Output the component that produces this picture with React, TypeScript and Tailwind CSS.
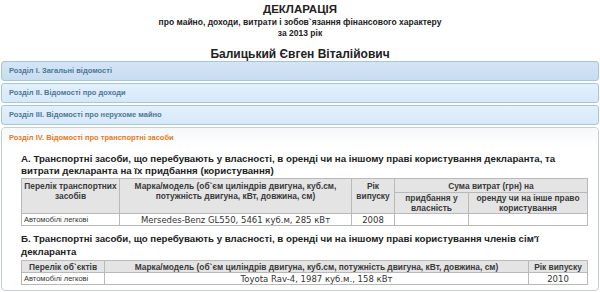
const sections = [
    { title: 'Розділ I. Загальні відомості', hover: true },
    { title: 'Розділ II. Відомості про доходи', hover: false },
    { title: 'Розділ III. Відомості про нерухоме майно', hover: false },
];

const th = 'border border-[#b9b9b9] bg-[#e4e4e4] px-[2px] font-bold text-[#3a3a3a] text-center font-["Liberation_Sans",Arial,sans-serif] text-[8.4px]';
const td = 'border border-[#b9b9b9] bg-white px-[2px] text-[#333]';

const App = () => {
    return (
        <div className="w-[600px] h-[292px] bg-white overflow-hidden font-['Liberation_Sans',Arial,sans-serif] text-[#222]">
            <div className="pt-[3px] text-center font-bold">
                <div className="text-[11.5px] leading-[13px]">ДЕКЛАРАЦІЯ</div>
                <div className="mt-[1px] text-[8.5px] leading-[11px]">про майно, доходи, витрати і зобов`язання фінансового характеру</div>
                <div className="text-[8.5px] leading-[11px]">за 2013 рік</div>
                <div className="mt-[8px] text-[12px] leading-[14px]">Балицький Євген Віталійович</div>
            </div>

            <div className="flex flex-col gap-[2px] px-[1px]">
                {sections.map((s) => (
                    <div
                        key={s.title}
                        className={`h-[20px] flex items-center pl-[7px] rounded-[3px] border border-[#a9c6d6] text-[7.5px] font-bold text-[#4d7796] ${s.hover ? 'bg-gradient-to-b from-[#d3e5f5] to-[#c9ddf0]' : 'bg-gradient-to-b from-[#e3f0fc] to-[#d6e8f9]'}`}
                    >
                        {s.title}
                    </div>
                ))}

                <div className="h-[164px] rounded-[4px] border border-[#c6cfd3] bg-white">
                    <div className="h-[20px] flex items-center pl-[7px] rounded-t-[3px] bg-gradient-to-b from-[#f5f8f9] to-white text-[7.5px] font-bold text-[#e27a22]">
                        Розділ IV. Відомості про транспортні засоби
                    </div>

                    <div className="pl-[19px] pr-[10px]">
                        <div className="pt-[5px] text-[9.7px] leading-[12px] font-bold text-[#222]">
                            А. Транспортні засоби, що перебувають у власності, в оренді чи на іншому праві користування декларанта, та витрати декларанта на їх придбання (користування)
                        </div>
                        <table className="mt-[1px] w-full border-collapse text-[8.5px] leading-[10px] font-['DejaVu_Sans',Verdana,sans-serif]">
                            <colgroup>
                                <col className="w-[98px]" />
                                <col className="w-[232px]" />
                                <col className="w-[43px]" />
                                <col className="w-[74px]" />
                                <col />
                            </colgroup>
                            <tbody>
                                <tr className="h-[14px]">
                                    <td rowSpan={2} className={`${th} align-top pt-[2px] h-[35px] px-0 whitespace-nowrap`}>Перелік транспортних<br />засобів</td>
                                    <td rowSpan={2} className={`${th} align-top pt-[2px]`}>Марка/модель (об`єм циліндрів двигуна, куб.см, потужність двигуна, кВт, довжина, см)</td>
                                    <td rowSpan={2} className={`${th} align-top pt-[2px] px-0`}>Рік випуску</td>
                                    <td colSpan={2} className={th}>Сума витрат (грн) на</td>
                                </tr>
                                <tr className="h-[21px]">
                                    <td className={th}>придбання у власність</td>
                                    <td className={th}>оренду чи на інше право користування</td>
                                </tr>
                                <tr className="h-[12px]">
                                    <td className={`${td} font-['Liberation_Sans',Arial,sans-serif] text-[7.5px]`}>Автомобілі легкові</td>
                                    <td className={`${td} text-center`}>Mersedes-Benz GL550, 5461 куб.м, 285 кВт</td>
                                    <td className={`${td} text-center`}>2008</td>
                                    <td className={td}></td>
                                    <td className={td}></td>
                                </tr>
                            </tbody>
                        </table>

                        <div className="mt-[6px] text-[9.7px] leading-[13px] font-bold text-[#222]">
                            Б. Транспортні засоби, що перебувають у власності, в оренді чи на іншому праві користування членів сім'ї декларанта
                        </div>
                        <table className="mt-[2px] w-full border-collapse text-[8.5px] leading-[10px] font-['DejaVu_Sans',Verdana,sans-serif]">
                            <colgroup>
                                <col className="w-[83px]" />
                                <col />
                                <col className="w-[59px]" />
                            </colgroup>
                            <tbody>
                                <tr className="h-[12px]">
                                    <td className={th}>Перелік об`єктів</td>
                                    <td className={th}>Марка/модель (об`єм циліндрів двигуна, куб.см, потужність двигуна, кВт, довжина, см)</td>
                                    <td className={`${th} px-0`}>Рік випуску</td>
                                </tr>
                                <tr className="h-[12px]">
                                    <td className={`${td} font-['Liberation_Sans',Arial,sans-serif] text-[7.5px]`}>Автомобілі легкові</td>
                                    <td className={`${td} text-center`}>Toyota Rav-4, 1987 куб.м., 158 кВт</td>
                                    <td className={`${td} text-center`}>2010</td>
                                </tr>
                            </tbody>
                        </table>
                    </div>
                </div>
            </div>
        </div>
    );
};

export default App;
